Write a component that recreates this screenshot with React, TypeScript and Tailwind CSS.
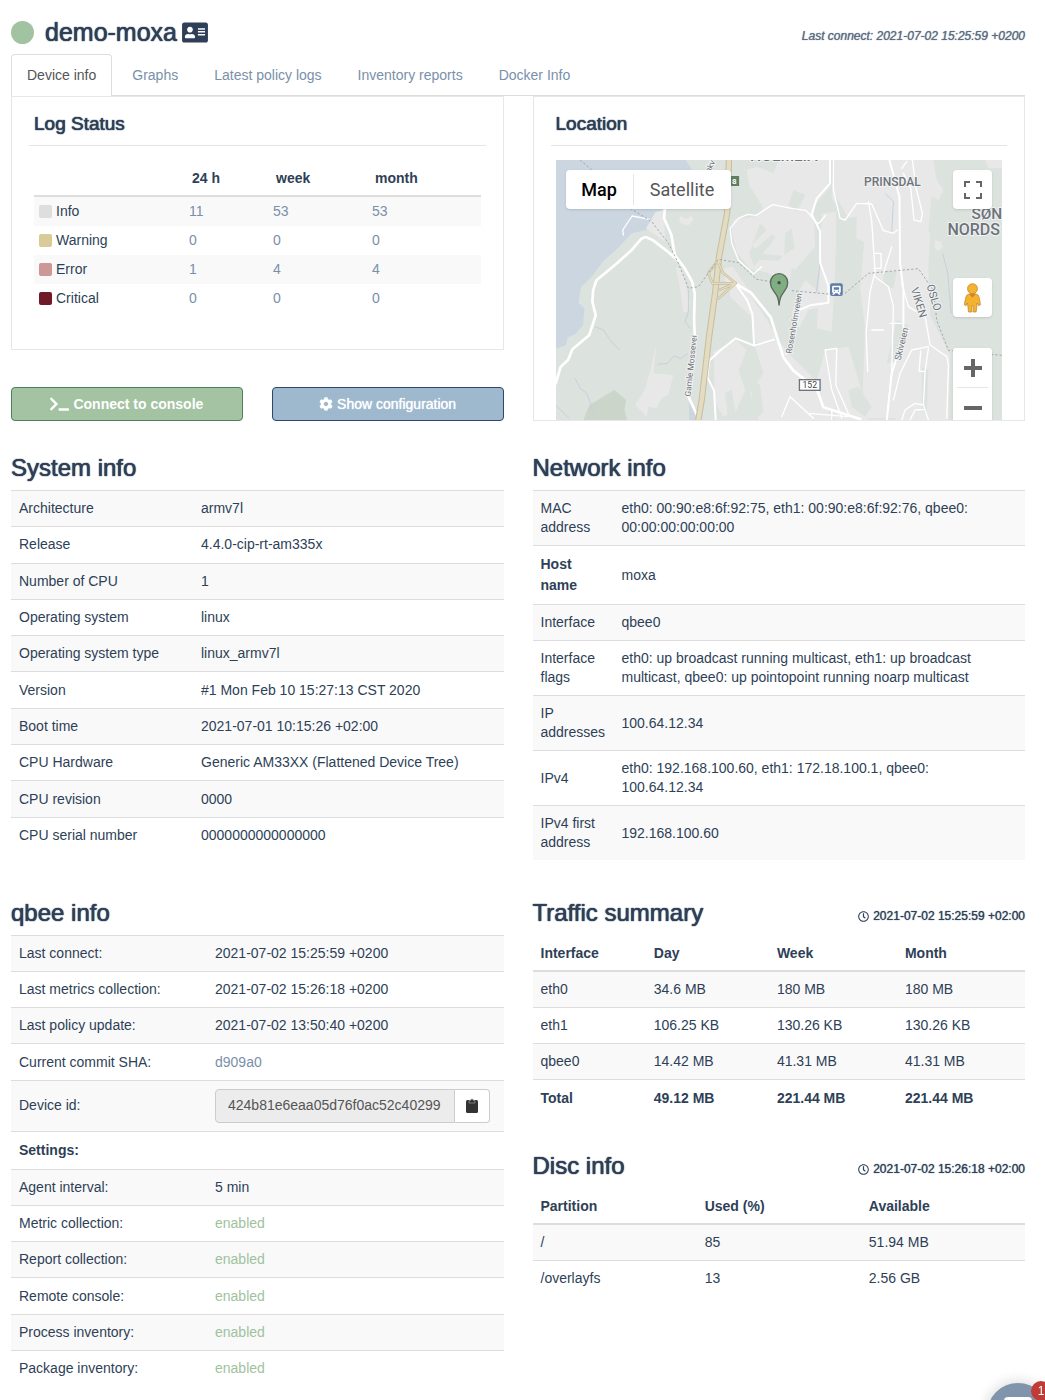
import type { ReactNode } from "react";
import { FaAddressCard, FaCog, FaRegClock, FaTerminal } from "react-icons/fa";

const MEDIUM = "[text-shadow:0_0_1px_currentColor]";
const HEADING = "[text-shadow:0_0_1px_currentColor,0_0_1px_currentColor]";

const tabs = ["Device info", "Graphs", "Latest policy logs", "Inventory reports", "Docker Info"];

const logRows = [
  { label: "Info", swatch: "bg-[#dddfde]", counts: ["11", "53", "53"] },
  { label: "Warning", swatch: "bg-[#d9cb98]", counts: ["0", "0", "0"] },
  { label: "Error", swatch: "bg-[#cc9795]", counts: ["1", "4", "4"] },
  { label: "Critical", swatch: "bg-[#701a27]", counts: ["0", "0", "0"] },
];

const systemRows = [
  ["Architecture", "armv7l"],
  ["Release", "4.4.0-cip-rt-am335x"],
  ["Number of CPU", "1"],
  ["Operating system", "linux"],
  ["Operating system type", "linux_armv7l"],
  ["Version", "#1 Mon Feb 10 15:27:13 CST 2020"],
  ["Boot time", "2021-07-01 10:15:26 +02:00"],
  ["CPU Hardware", "Generic AM33XX (Flattened Device Tree)"],
  ["CPU revision", "0000"],
  ["CPU serial number", "0000000000000000"],
];

const networkRows = [
  ["MAC address", "eth0: 00:90:e8:6f:92:75, eth1: 00:90:e8:6f:92:76, qbee0: 00:00:00:00:00:00"],
  ["Host name", "moxa"],
  ["Interface", "qbee0"],
  ["Interface flags", "eth0: up broadcast running multicast, eth1: up broadcast multicast, qbee0: up pointopoint running noarp multicast"],
  ["IP addresses", "100.64.12.34"],
  ["IPv4", "eth0: 192.168.100.60, eth1: 172.18.100.1, qbee0: 100.64.12.34"],
  ["IPv4 first address", "192.168.100.60"],
];

const settings = [
  "Metric collection:",
  "Report collection:",
  "Remote console:",
  "Process inventory:",
  "Package inventory:",
];

function Row({ label, children, bold, labelWidth }: { label: string; children?: ReactNode; bold?: boolean; labelWidth: string }) {
  return (
    <tr className="border-t border-[#dddddd] odd:bg-[#f9f9f9]">
      <th
        scope="row"
        className={`${labelWidth} px-2 py-2 text-left align-middle ${bold ? "font-bold leading-[21px]" : "font-normal"}`}
      >
        {label}
      </th>
      <td className="py-2 pr-[14px] pl-2 align-middle">{children}</td>
    </tr>
  );
}

function Panel({ title, children, className = "" }: { title: string; children: ReactNode; className?: string }) {
  return (
    <section className={`border border-[#e7e7e7] px-[17px] ${className}`}>
      <h2 className={`border-b border-[#e5e5e5] px-[5px] pt-[17px] pb-[11px] text-[19px] leading-5 ${HEADING}`}>{title}</h2>
      <div className="px-[5px] pt-[14px]">{children}</div>
    </section>
  );
}

function Heading({ children, stamp }: { children: ReactNode; stamp?: string }) {
  return (
    <div className="flex items-end justify-between pb-[9px]">
      <h2 className={`text-2xl leading-[26px] ${HEADING}`}>{children}</h2>
      {stamp && (
        <span className={`flex items-center gap-1 text-xs leading-5 ${MEDIUM}`}>
          <FaRegClock className="size-[11px]" />
          {stamp}
        </span>
      )}
    </div>
  );
}

function DataTable({ head, rows, widths, totalLast }: { head: string[]; rows: string[][]; widths: string[]; totalLast?: boolean }) {
  return (
    <table className="w-full table-fixed">
      <thead>
        <tr className="border-b-2 border-[#dddddd]">
          {head.map((h, i) => (
            <th key={h} scope="col" className={`${widths[i]} px-2 pt-[9px] pb-[7px] text-left`}>{h}</th>
          ))}
        </tr>
      </thead>
      <tbody>
        {rows.map((r, n) => (
          <tr
            key={r[0]}
            className={`border-t border-[#dddddd] odd:bg-[#f9f9f9] ${totalLast && n === rows.length - 1 ? "font-bold leading-[21px]" : ""}`}
          >
            {r.map((c, i) => (
              <td key={i} className="px-2 py-2">{c}</td>
            ))}
          </tr>
        ))}
      </tbody>
    </table>
  );
}

function MapDrawing() {
  return (
    <svg viewBox="92 210 1341 780" preserveAspectRatio="xMidYMin slice" className="block h-full w-full" aria-hidden="true">
      <rect x="0" y="200" width="1600" height="800" fill="#dce2dd" />
      <path d="M92 200H475L500 238 470 300 415 355 392 385 370 402 362 420 320 430 275 478 235 512 200 560 168 590 160 638 178 655 174 705 150 733 128 742 122 766 92 776Z" fill="#cbd6e1" />
      <path d="M492 935l25 25-5 30h-20z" fill="#cbd6e1" />
      <path d="M175 990l18-45 75-45 35 30-5 30 8 30z" fill="#cbd5ca" />
      <g fill="#e8e8e8">
        <path d="M392 365l25-5 3 95-22-15-35-25zM465 378l20 8 15-8 4 12-12 16-22-4-8-10zM452 530l20 8 22 100-8 30-12-5-8-60z" />
        <path d="M395 760l-10 90 60 5-15 60-20 10-15 30-25-5-5 30-35-35 28-45 18-60z" />
        <path d="M625 390l60-10 55-38 60 15 10 130-20 100-65-40-50-10-40-50-15-60z" />
        <path d="M665 240l30-10 50 20 5 60 30 40-70-5-38-60zM595 535l28-5 35 50 30 55 28 40 45 75-70 10-12-80-60-55-20-60z" />
        <path d="M565 785l70-35 30 30-25 60 20 60-25 60-40 20-25-40z" />
        <path d="M690 770l70-20 30 40 90 90 40 110h-220l-25-80 40-60z" />
        <path d="M760 210h155v80l-50 60 5 120-60 70-60-40-40-150z" />
        <path d="M925 210h270l25 100-10 120-80 30-15 90-40 15-40-100-40-20-45-60-30-60z" />
        <path d="M890 370l45-5-5 180-10 180-45-10 10-170zM1020 430l60-15 90 30 40 120 5 150-15 270h-190l10-270-15-120z" />
        <path d="M1170 440l45-15-5 110 5 140 60 120-5 195H1110l35-200zM1165 210h60l10 60 20 30-15 30-30-15-30-50zM840 570l40 35 20 45-50 10-30 60-30-60zM900 780l70-10 30 100 30 120H930l-60-100zM1380 210h52v25h-40zM1230 450l18 6 4 15-12 12-12-10z" />
      </g>
      <g fill="#dce2dd">
        <path d="M705 400l20 20-45 45 10 12 50-45 12 10-40 50 60 5-10 15-60-2-15 20-15-40zM780 430l20-15 8 60-30 20zM805 300l35 15-25 50-25-20z" />
        <path d="M930 315l40 70 25-5-5 200 30 130-25 35-35-15-10-220-15-60zM1075 540l40 5-10 50-30-10zM1115 690l35 15-30 110-35 5z" />
        <path d="M600 910l20-10 10 60-20 30zM680 870l25 15 10 80-20 20-15-50zM970 900l30-10 40 60-20 30-40-30z" />
        <path d="M770 590l50 15-20 70 35 60-45 35-40-70zM1190 830l20 10-5 130-15-10z" />
      </g>
      <g fill="none" stroke="#c6d1de" strokeWidth="3">
        <path d="M210 710l25 10 20 30 28 30M150 865l15 30 20 15 22 60M92 945l40 40M397 823l30-3 20-22 20 8 20-15M490 600v65l-10 30 15 20M1080 310l25 25-5 90M1253 490l15 60 10 120M885 520l-12 90" />
      </g>
      <g fill="none" stroke="#fff" strokeLinejoin="round" strokeLinecap="round">
        <path strokeWidth="8" d="M92 880l15-50 22-20 13-32 50-42 20-60-10-40 2-35 10-30 60-50 45-40 30-35 12-5 20 8 42 32 30 25 5 5M420 345l-3 40 22 50 10 60 30 40 22 40 8 35-2 80 3 70-10 30M490 920l28 60M632 582l45 25 60 75 38 120 30 40 70 55 20 55 110 35" />
        <path strokeWidth="6" d="M632 582l35 50 15 40 5 95 60-18M687 767l-55-22-45 35-35 32-5 50 20 40 5 90M915 210v70l-40 45-15 48 25 50v95l25 70v50l-55 8-35 15-22 90-15 40M1093 210l30 110 2 200 10 80v140l-35 110-15 140" />
        <path strokeWidth="4" d="M295 435l-2-15 28-42 52 10M620 460l-5-45 25-30 28-12 25 3 50-32 60 12 40 5 30 35 8 5 20-25M620 460l20 50 45 42 25-22M925 210v90l20 85 15 5 35-50 45 2 35 80 30 8 12-10M1145 215l-15 20M1135 250l22 45 10 95 20 5 5-25-20-80-10-80M1030 335l10 60 10 150-15 60-12 120 5 120M1050 560l40 30 15 60-5 190-12 120M1075 550l25-80M1050 490h18v45h-22M1130 580l20 70 50 30 15 85 50 35 5 25-5 160M1210 770l-50 10-35 70-20 80M1210 775l-10 70-18-2 5-60M1200 845l-5 100M900 780l35-5-3 110 40 90M900 780l20 120 30 85M770 980l25-60 70 65M850 970l120 10M920 960v30M1130 990l10-30 30-20 25 5 15 45M1155 990l15-30 30-2M1040 720h35M1095 700h35" />
      </g>
      <g fill="none" strokeLinejoin="round">
        <path stroke="#c9bd97" strokeWidth="19" d="M612 200L606 370 582 500 570 610 552 740 530 930 518 1000" />
        <path stroke="#e3dcc5" strokeWidth="13" d="M612 200L606 370 582 500 570 610 552 740 530 930 518 1000" />
        <path stroke="#c9bd97" strokeWidth="8" d="M575 515l-25 35 12 30 70 0-55 48M580 520l15 30 37 30-50 20" />
        <path stroke="#e3dcc5" strokeWidth="4" d="M575 515l-25 35 12 30 70 0-55 48M580 520l15 30 37 30-50 20" />
      </g>
      <g fill="none" stroke="#a3a9b1" strokeWidth="3" strokeDasharray="7 6">
        <path d="M165 210l35 30M315 355l65 40 50 65 30 60 30 75 30-5 60-82 60 10 55 50 50 8M800 602l110 10M960 610l70-60 150-14 45 65 10 90 35 90 160 15" />
      </g>
      <g fontFamily="Roboto, sans-serif" fill="#6c737b" stroke="#f2f2f2" strokeWidth="6" paintOrder="stroke">
        <text x="1017" y="289" fontSize="36" fontWeight="500">PRINSDAL</text>
        <text x="675" y="213" fontSize="47" fontWeight="500">HOLMLIA</text>
        <text x="1339" y="387" fontSize="46" fontWeight="500">SØN</text>
        <text x="1267" y="434" fontSize="48" fontWeight="500">NORDS</text>
        <text transform="translate(1225 580) rotate(73)" y="22" fontSize="33">OSLO</text>
        <text transform="translate(1178 590) rotate(73)" y="22" fontSize="33">VIKEN</text>
        <text transform="translate(496 920) rotate(-84)" fontSize="25">Gamle Mossevei</text>
        <text transform="translate(799 792) rotate(-80)" fontSize="25">Rosenholmveien</text>
        <text transform="translate(1126 812) rotate(-76)" fontSize="27">Skiveien</text>
        <text transform="translate(555 250) rotate(-65)" fontSize="25">akv</text>
      </g>
      <rect x="600" y="258" width="42" height="30" fill="#5f7f62" />
      <text x="621" y="282" fontSize="24" fontWeight="700" fontFamily="Roboto, sans-serif" fill="#fff">8</text>
      <rect x="823" y="869" width="62" height="32" fill="#fff" stroke="#6c737b" strokeWidth="4" />
      <text x="854" y="894" textAnchor="middle" fontSize="26" fontFamily="Roboto, sans-serif" fill="#444">152</text>
      <rect x="915" y="580" width="38" height="38" rx="6" fill="#5c7da6" />
      <path d="M925 587h18q4 0 4 4v14q0 4-4 4l4 5h-6l-3-4h-8l-3 4h-6l4-5q-4 0-4-4v-14q0-4 4-4zM926 592v7h16v-7zM926 602v3h4v-3zM938 602v3h4v-3z" fill="#fff" fillRule="evenodd" />
      <path d="M762 646c-2-26-8-32-17-44-6-8-9-15-9-24a26 27 0 0 1 52 0c0 9-3 16-9 24-9 12-15 18-17 44z" fill="#81ad82" stroke="#59695a" strokeWidth="4" />
      <circle cx="762" cy="578" r="5" fill="#38523b" />
    </svg>
  );
}

function Pegman() {
  return (
    <svg viewBox="0 0 50 90" className="h-[30px] w-[17px]" aria-hidden="true">
      <g fill="#f3b22f" stroke="#b9812b" strokeWidth="2" strokeLinejoin="round">
        <path d="M12 34q13-6 26 0 6 2 7 9l4 22-6 3-4-8-3 27H27V68h-4v19H13L10 60l-4 8-6-3 5-22q1-7 7-9z" />
        <circle cx="25" cy="17" r="15" />
      </g>
      <path d="M15 33h20L25 44z" fill="#d98222" />
    </svg>
  );
}

const control = "flex w-[39px] items-center justify-center bg-white text-[#666666]";

function LocationMap() {
  return (
    <div className="relative h-[260px] overflow-hidden">
      <MapDrawing />
      <div className="absolute top-[10px] left-[10px] flex h-[39px] rounded-sm bg-white font-[Roboto,sans-serif] text-lg shadow">
        <button type="button" className="w-[67px] font-medium text-black">Map</button>
        <span className="my-1 w-px bg-[#e6e6e6]" />
        <button type="button" className="w-[97px] text-[#565656]">Satellite</button>
      </div>
      <div className="absolute top-[10px] right-[10px] flex flex-col">
        <button type="button" aria-label="Toggle fullscreen view" className={`${control} h-[39px] rounded-sm shadow`}>
          <svg viewBox="0 0 18 18" className="size-[18px]" fill="none" stroke="currentColor" strokeWidth="2" aria-hidden="true">
            <path d="M1 6V1h5M12 1h5v5M17 12v5h-5M6 17H1v-5" />
          </svg>
        </button>
        <button type="button" aria-label="Street View" className={`${control} mt-[69px] h-[39px] rounded-sm shadow`}>
          <Pegman />
        </button>
        <div className="mt-[31px] flex flex-col rounded-sm bg-white shadow">
          <button type="button" aria-label="Zoom in" className={`${control} h-[39px] rounded-sm`}>
            <svg viewBox="0 0 18 18" className="size-[18px]" fill="none" stroke="currentColor" strokeWidth="4" aria-hidden="true">
              <path d="M9 0v18M0 9h18" />
            </svg>
          </button>
          <span className="mx-1 h-px bg-[#e6e6e6]" />
          <button type="button" aria-label="Zoom out" className={`${control} h-[39px] rounded-sm`}>
            <svg viewBox="0 0 18 18" className="size-[18px]" fill="none" stroke="currentColor" strokeWidth="4" aria-hidden="true">
              <path d="M0 9h18" />
            </svg>
          </button>
        </div>
      </div>
    </div>
  );
}

export default function App() {
  return (
    <div className="bg-white pr-5 pl-[11px] font-['Liberation_Sans',Arial,sans-serif] text-sm leading-[19px] text-[#2e3f57]">
      <header className="flex items-center justify-between pt-[18px]">
        <div className="flex items-center">
          <span className="size-[23px] rounded-full bg-[#a2c3a2]" />
          <h1 className={`ml-[11px] text-[25px] leading-7 ${HEADING}`}>demo-moxa</h1>
          <FaAddressCard className="ml-[5px] h-[23px] w-[26px]" />
        </div>
        <p className={`pt-2 text-xs leading-5 italic text-[#5c6b80] ${MEDIUM}`}>Last connect: 2021-07-02 15:25:59 +0200</p>
      </header>

      <nav className="mt-2 flex gap-1 border-b border-[#dddddd]">
        {tabs.map((t, i) => (
          <a
            key={t}
            href="#"
            aria-current={i === 0 ? "page" : undefined}
            className={
              i === 0
                ? "-mb-px rounded-t border border-b-0 border-[#dddddd] bg-white px-[15px] pt-[11px] pb-[11px] text-[#555555]"
                : "border border-transparent px-[15px] pt-[11px] pb-[9px] text-[#7990aa]"
            }
          >
            {t}
          </a>
        ))}
      </nav>

      <main className="grid grid-cols-2 gap-x-[29px]">
        <div className="flex flex-col justify-between">
          <Panel title="Log Status" className="pb-9">
            <table className="w-full table-fixed">
              <thead>
                <tr className="border-b-2 border-[#dddddd] text-left">
                  <td className="w-[150px]" />
                  <th scope="col" className="w-[84px] px-2 pt-[9px] pb-[7px]">24 h</th>
                  <th scope="col" className="w-[99px] px-2 pt-[9px] pb-[7px]">week</th>
                  <th scope="col" className="px-2 pt-[9px] pb-[7px]">month</th>
                </tr>
              </thead>
              <tbody>
                {logRows.map((r) => (
                  <tr key={r.label} className="odd:bg-[#f9f9f9]">
                    <th scope="row" className="p-[5px] text-left font-normal">
                      <span className="flex items-center gap-1">
                        <span className={`size-[13px] rounded-xs ${r.swatch}`} />
                        {r.label}
                      </span>
                    </th>
                    {r.counts.map((c, i) => (
                      <td key={i} className="p-[5px]">
                        <a href="#" className="text-[#7990aa]">{c}</a>
                      </td>
                    ))}
                  </tr>
                ))}
              </tbody>
            </table>
          </Panel>
          <div className="grid grid-cols-2 gap-[29px] text-white">
            <button type="button" className="flex h-[34px] items-center justify-center gap-1 rounded border border-[#4b8158] bg-[#a3c3a3] font-bold">
              <FaTerminal className="h-4 w-[19px]" />
              Connect to console
            </button>
            <button type="button" className={`flex h-[34px] items-center justify-center gap-1 rounded border border-[#30466a] bg-[#9eb9ce] ${MEDIUM}`}>
              <FaCog className="size-[14px]" />
              Show configuration
            </button>
          </div>
        </div>
        <Panel title="Location">
          <LocationMap />
        </Panel>

        <section className="pt-[34px]">
          <Heading>System info</Heading>
          <table className="h-[363px] w-full table-fixed">
            <tbody>
              {systemRows.map(([k, v]) => (
                <Row key={k} label={k} labelWidth="w-[182px]">{v}</Row>
              ))}
            </tbody>
          </table>
        </section>
        <section className="pt-[34px]">
          <Heading>Network info</Heading>
          <table className="w-full table-fixed">
            <tbody>
              {networkRows.map(([k, v]) => (
                <Row key={k} label={k} bold={k === "Host name"} labelWidth="w-[81px]">{v}</Row>
              ))}
            </tbody>
          </table>
        </section>

        <section className="pt-10">
          <Heading>qbee info</Heading>
          <table className="h-[451px] w-full table-fixed">
            <tbody>
              <Row label="Last connect:" labelWidth="w-[196px]">2021-07-02 15:25:59 +0200</Row>
              <Row label="Last metrics collection:" labelWidth="w-[196px]">2021-07-02 15:26:18 +0200</Row>
              <Row label="Last policy update:" labelWidth="w-[196px]">2021-07-02 13:50:40 +0200</Row>
              <Row label="Current commit SHA:" labelWidth="w-[196px]">
                <a href="#" className="text-[#7990aa]">d909a0</a>
              </Row>
              <Row label="Device id:" labelWidth="w-[196px]">
                <div className="flex h-[34px]">
                  <input
                    readOnly
                    aria-label="Device id"
                    value="424b81e6eaa05d76f0ac52c40299"
                    className="min-w-0 flex-1 rounded-l border border-[#cccccc] bg-[#ececec] px-3 text-[#555555]"
                  />
                  <button type="button" aria-label="Copy device id" className="flex w-[35px] items-center justify-center rounded-r border border-l-0 border-[#cccccc] bg-white text-[#333333]">
                    <svg viewBox="0 0 12 15" className="h-[15px] w-3" aria-hidden="true">
                      <rect x="0" y="2" width="12" height="13" rx="1.5" fill="currentColor" />
                      <path d="M3 5V2.500h1.500a1.500 1.500 0 0 1 3 0H9V5z" fill="currentColor" stroke="#aaa" strokeWidth=".6" />
                    </svg>
                  </button>
                </div>
              </Row>
              <Row label="Settings:" bold labelWidth="w-[196px]" />
              <Row label="Agent interval:" labelWidth="w-[196px]">5 min</Row>
              {settings.map((s) => (
                <Row key={s} label={s} labelWidth="w-[196px]">
                  <span className="text-[#9fc29f]">enabled</span>
                </Row>
              ))}
            </tbody>
          </table>
        </section>
        <div className="pt-10">
          <section>
            <Heading stamp="2021-07-02 15:25:59 +02:00">Traffic summary</Heading>
            <DataTable
              head={["Interface", "Day", "Week", "Month"]}
              widths={["w-[23%]", "w-[25%]", "w-[26%]", "w-[26%]"]}
              totalLast
              rows={[
                ["eth0", "34.6 MB", "180 MB", "180 MB"],
                ["eth1", "106.25 KB", "130.26 KB", "130.26 KB"],
                ["qbee0", "14.42 MB", "41.31 MB", "41.31 MB"],
                ["Total", "49.12 MB", "221.44 MB", "221.44 MB"],
              ]}
            />
          </section>
          <section className="pt-9">
            <Heading stamp="2021-07-02 15:26:18 +02:00">Disc info</Heading>
            <DataTable
              head={["Partition", "Used (%)", "Available"]}
              widths={["w-1/3", "w-1/3", "w-1/3"]}
              rows={[
                ["/", "85", "51.94 MB"],
                ["/overlayfs", "13", "2.56 GB"],
              ]}
            />
          </section>
        </div>
      </main>

      <button
        type="button"
        aria-label="Open chat, 1 unread message"
        className="fixed right-[-4px] bottom-[-45px] flex size-[62px] justify-center rounded-full bg-[#8095ac] pt-[14px] shadow-[0_0_12px_3px_rgba(0,0,0,0.12)]"
      >
        <span className="h-6 w-7 rounded bg-white" />
        <span className="absolute top-[-2px] right-[-2px] flex size-5 items-center justify-center rounded-full bg-[#c23a36] text-xs text-white">1</span>
      </button>
    </div>
  );
}
